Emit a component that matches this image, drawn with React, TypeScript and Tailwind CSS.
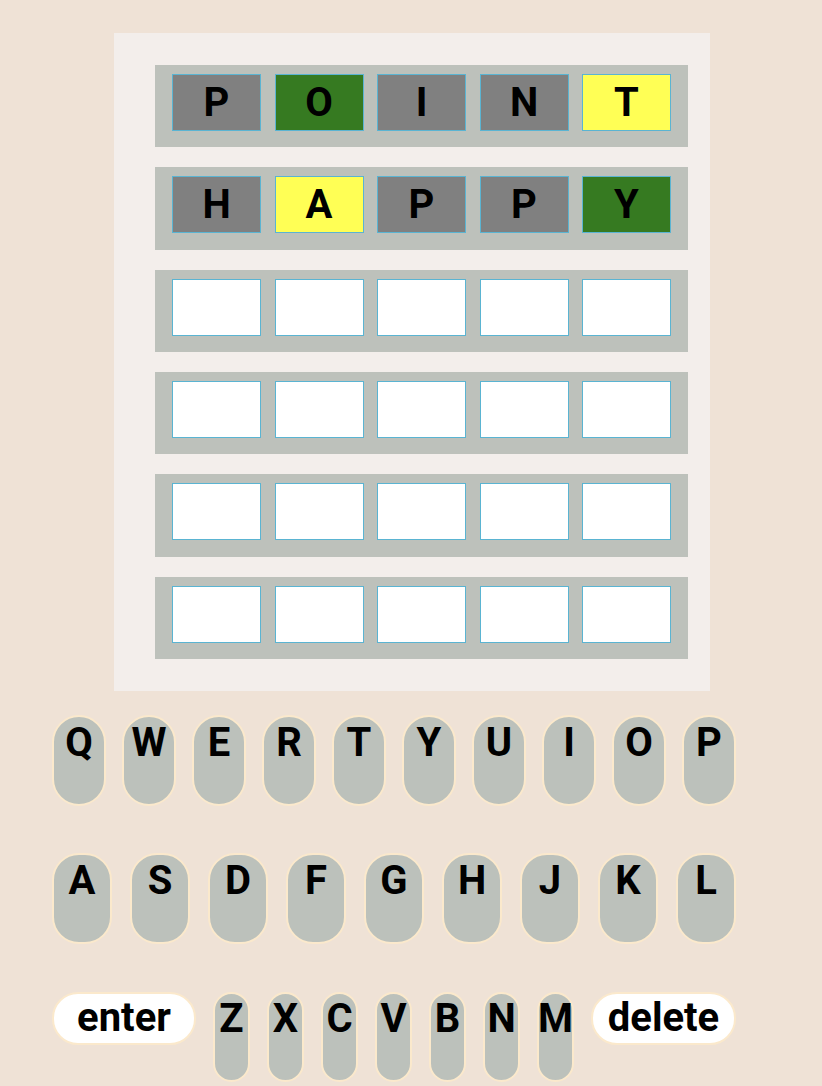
import React from "react";

type State = "absent" | "correct" | "present" | "empty";

const rows: { l: string; s: State }[][] = [
  [
    { l: "P", s: "absent" },
    { l: "O", s: "correct" },
    { l: "I", s: "absent" },
    { l: "N", s: "absent" },
    { l: "T", s: "present" },
  ],
  [
    { l: "H", s: "absent" },
    { l: "A", s: "present" },
    { l: "P", s: "absent" },
    { l: "P", s: "absent" },
    { l: "Y", s: "correct" },
  ],
  ...Array.from({ length: 4 }, () =>
    Array.from({ length: 5 }, () => ({ l: "", s: "empty" as State }))
  ),
];

const tileBg: Record<State, string> = {
  absent: "bg-[#808080]",
  correct: "bg-[#367a21]",
  present: "bg-[#ffff55]",
  empty: "bg-white",
};

const font = { fontFamily: "Roboto, 'Liberation Sans', sans-serif" };

function Key({ k, w }: { k: string; w: string }) {
  return (
    <div
      className={`${w} h-[91px] shrink-0 rounded-[27px] border-2 border-[#fbe9cc] bg-[#bcc1bb] flex justify-center pt-[6px] text-[40px] leading-[40px] font-bold text-black`}
    >
      {k}
    </div>
  );
}

export default function App() {
  return (
    <div className="min-h-[1086px] w-full bg-[#efe2d6] overflow-hidden" style={font}>
      <div className="pt-[33px] pl-[114px]">
        <div className="w-[596px] bg-[#f3eeeb] pl-[41px] pr-[22px] py-[32px] flex flex-col gap-[20px]">
          {rows.map((row, i) => (
            <div
              key={i}
              className="h-[82.33px] bg-[#bdc1bb] px-[17px] pt-[9px] flex justify-between items-start"
            >
              {row.map((t, j) => (
                <div
                  key={j}
                  className={`w-[89px] h-[57px] border border-[#5ab4d2] ${tileBg[t.s]} flex items-center justify-center text-[40px] font-bold leading-none text-black`}
                >
                  {t.l}
                </div>
              ))}
            </div>
          ))}
        </div>
      </div>

      <div className="ml-[52px] w-[684px] mt-[24px] flex flex-col">
        <div className="flex gap-[16px]">
          {"QWERTYUIOP".split("").map((k) => (
            <Key key={k} k={k} w="w-[54px]" />
          ))}
        </div>
        <div className="flex gap-[18px] mt-[47px]">
          {"ASDFGHJKL".split("").map((k) => (
            <Key key={k} k={k} w="w-[60px]" />
          ))}
        </div>
        <div className="flex gap-[17px] mt-[48px] items-start">
          <div className="w-[144px] h-[53px] rounded-[26px] border-2 border-[#fbe9cc] bg-white flex items-center justify-center text-[40px] leading-[40px] font-bold text-black">
            enter
          </div>
          {"ZXCVBNM".split("").map((k) => (
            <div
              key={k}
              className="w-[37px] h-[90px] shrink-0 rounded-[19px] border-2 border-[#fbe9cc] bg-[#bcc1bb] flex justify-center pt-[5px] text-[40px] leading-[40px] font-bold text-black"
            >
              {k}
            </div>
          ))}
          <div className="w-[145px] h-[53px] rounded-[26px] border-2 border-[#fbe9cc] bg-white flex items-center justify-center text-[40px] leading-[40px] font-bold text-black">
            delete
          </div>
        </div>
      </div>
    </div>
  );
}
